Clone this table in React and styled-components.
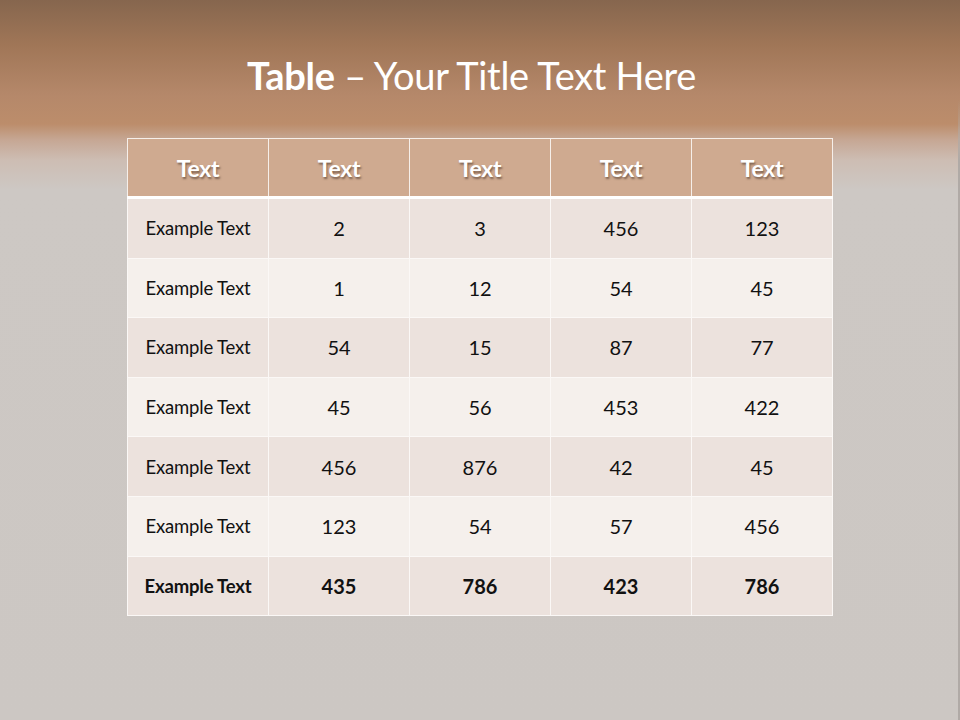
import React from "react";
import styled, { createGlobalStyle } from "styled-components";

const Global = createGlobalStyle`
  html, body { margin: 0; padding: 0; }
  body { font-family: Lato, "Open Sans", sans-serif; }
`;

const Slide = styled.div`
  position: relative;
  width: 960px;
  height: 720px;
  box-sizing: border-box;
  background: linear-gradient(
    to bottom,
    #86664e 0px,
    #a07657 45px,
    #b5886a 95px,
    #bc8d6b 124px,
    #c6a794 140px,
    #cdbdb3 160px,
    #cdc8c4 190px,
    #ccc7c3 720px
  );
  display: flex;
  flex-direction: column;
  align-items: center;
  padding-top: 51px;
  overflow: hidden;
`;

const EdgeShade = styled.div`
  position: absolute;
  top: 100px;
  right: 0;
  bottom: 0;
  width: 2px;
  background: linear-gradient(to bottom, rgba(150, 140, 135, 0), #b0aaa6 60px);
`;

const Title = styled.h1`
  margin: 0 17px 0 0;
  height: 48px;
  line-height: 48px;
  font-size: 38px;
  font-weight: 400;
  color: #ffffff;
  letter-spacing: -0.3px;
  text-align: center;
  b { font-weight: 700; }
`;

const Table = styled.table`
  margin-top: 39px;
  margin-left: 0px;
  width: 706px;
  border-collapse: collapse;
  table-layout: fixed;
  border: 1px solid #f6f1ed;
`;

const HeadCell = styled.th`
  height: 57px;
  padding: 0;
  background: #cfaa90;
  color: #ffffff;
  font-size: 23px;
  font-weight: 700;
  letter-spacing: -0.3px;
  text-align: center;
  text-shadow: 1px 2px 2px rgba(60, 40, 30, 0.55);
  border: 1px solid #f6efea;
  border-bottom: 3px solid #ffffff;
`;

const Row = styled.tr`
  background: ${(p) => (p.$alt ? "#f5f0ec" : "#ece2dd")};
`;

const Cell = styled.td`
  height: 58.6px;
  padding: 0;
  text-align: center;
  color: #111111;
  font-size: ${(p) => (p.$label ? "18.5px" : "20px")};
  letter-spacing: ${(p) => (p.$label ? "-0.2px" : "0")};
  font-weight: ${(p) => (p.$bold ? 700 : 400)};
  border: 1px solid #fbf8f6;
`;

const rows = [
  ["2", "3", "456", "123"],
  ["1", "12", "54", "45"],
  ["54", "15", "87", "77"],
  ["45", "56", "453", "422"],
  ["456", "876", "42", "45"],
  ["123", "54", "57", "456"],
  ["435", "786", "423", "786"],
];

export default function App() {
  return (
    <>
      <Global />
      <Slide>
        <EdgeShade />
        <Title>
          <b>Table</b> – Your Title Text Here
        </Title>
        <Table>
          <thead>
            <tr>
              {["Text", "Text", "Text", "Text", "Text"].map((t, i) => (
                <HeadCell key={i}>{t}</HeadCell>
              ))}
            </tr>
          </thead>
          <tbody>
            {rows.map((r, i) => {
              const bold = i === rows.length - 1;
              return (
                <Row key={i} $alt={i % 2 === 1}>
                  <Cell $label $bold={bold}>Example Text</Cell>
                  {r.map((v, j) => (
                    <Cell key={j} $bold={bold}>{v}</Cell>
                  ))}
                </Row>
              );
            })}
          </tbody>
        </Table>
      </Slide>
    </>
  );
}
